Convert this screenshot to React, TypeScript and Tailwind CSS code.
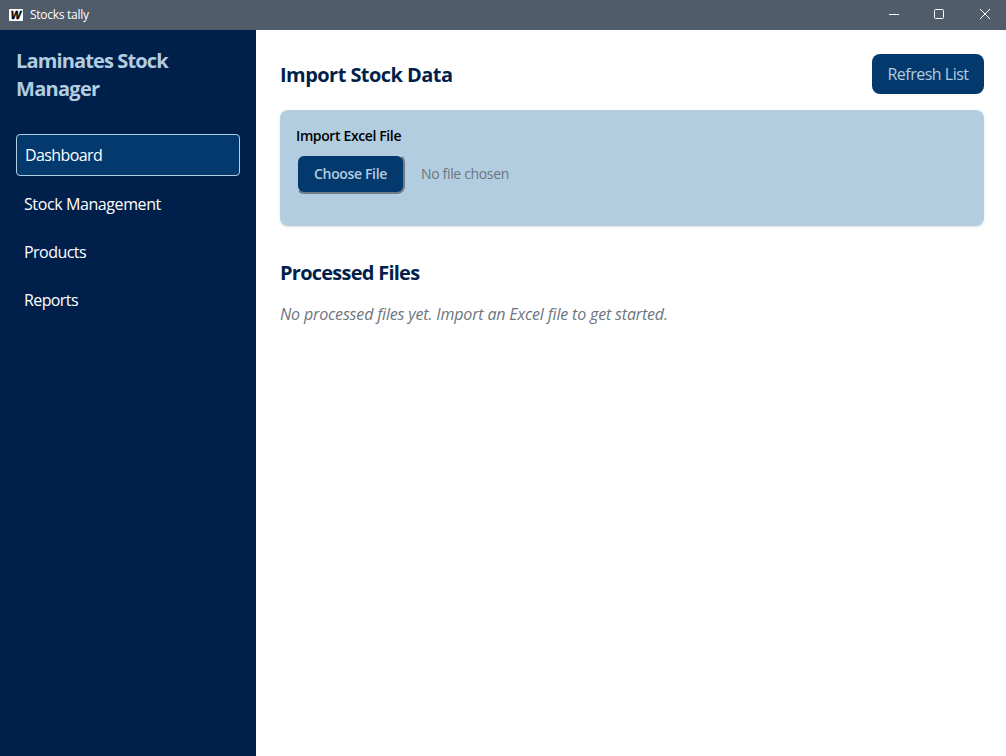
const nav = [
  { label: "Stock Management", tracking: "tracking-[-0.4px]" },
  { label: "Products", tracking: "tracking-[-0.55px]" },
  { label: "Reports", tracking: "tracking-[-0.6px]" },
];

function TitleBar() {
  return (
    <header className="flex h-[30px] shrink-0 items-center bg-[#515c6b] text-white">
      <span className="ml-[9px] flex h-3 w-[14px] items-center justify-center rounded-[1px] bg-white font-['Liberation_Sans',sans-serif] text-[11px] leading-3 font-black text-black italic [-webkit-text-stroke:0.4px_black]">
        W
      </span>
      <span className="ml-[7px] text-[12px] leading-4 tracking-[-0.28px]">Stocks tally</span>
      <svg className="ml-auto" width="118" height="30" viewBox="0 0 118 30" fill="none" stroke="#fff">
        <path d="M1 14.5H11" />
        <rect x="46.5" y="9.5" width="9" height="9" rx="1" />
        <path d="M92 9L102 19M102 9L92 19" />
      </svg>
    </header>
  );
}

export default function App() {
  return (
    <div className="flex h-[756px] w-[1006px] flex-col overflow-hidden bg-white font-['Open_Sans','Noto_Sans',sans-serif]">
      <TitleBar />
      <div className="flex flex-1">
        <aside className="w-64 shrink-0 bg-[#011f4b] p-4">
          <h1 className="mt-px text-xl leading-7 font-bold text-[#b3cde0]">
            <span className="block tracking-[-0.87px]">Laminates Stock</span>
            <span className="block tracking-[-0.7px]">Manager</span>
          </h1>
          <nav className="mt-[31px] flex flex-col gap-2 text-base leading-6 text-white">
            <a className="rounded border border-[#b3cde0] bg-[#03396c] p-2">
              <span className="tracking-[-0.6px]">Dashboard</span>
            </a>
            {nav.map((item) => (
              <a key={item.label} className="p-2">
                <span className={item.tracking}>{item.label}</span>
              </a>
            ))}
          </nav>
        </aside>
        <main className="flex-1 pt-6 pr-[22px] pl-6">
          <div className="flex h-10 items-center justify-between">
            <h2 className="pt-0.5 text-xl leading-7 font-bold text-[#011f4b]">
              <span className="tracking-[-0.55px]">Import Stock Data</span>
            </h2>
            <button className="h-10 w-28 rounded-lg bg-[#03396c] text-base leading-6 text-[#b3cde0]">
              <span className="tracking-[-0.5px]">Refresh List</span>
            </button>
          </div>
          <section className="mt-4 h-[116px] rounded-lg bg-[#b3cde0] p-4 shadow-sm">
            <p className="text-sm leading-5 font-semibold text-black">
              <span className="tracking-[-0.38px]">Import Excel File</span>
            </p>
            <div className="mt-2 flex items-center text-sm leading-5">
              <button className="h-10 w-[109px] rounded-lg border-2 border-t-[#b3cde0] border-r-[#717b85] border-b-[#717b85] border-l-[#b3cde0] bg-[#03396c] font-semibold text-[#b3cde0]">
                <span className="tracking-[-0.35px]">Choose File</span>
              </button>
              <span className="ml-4 tracking-[-0.34px] text-[#6c757d]">No file chosen</span>
            </div>
          </section>
          <h2 className="mt-[33px] text-xl leading-7 font-bold text-[#011f4b]">
            <span className="tracking-[-0.75px]">Processed Files</span>
          </h2>
          <p className="mt-[15px] text-base leading-6 text-[#6c757d] italic">
            <span className="tracking-[-0.165px]">No processed files yet. Import an Excel file to get started.</span>
          </p>
        </main>
      </div>
    </div>
  );
}
